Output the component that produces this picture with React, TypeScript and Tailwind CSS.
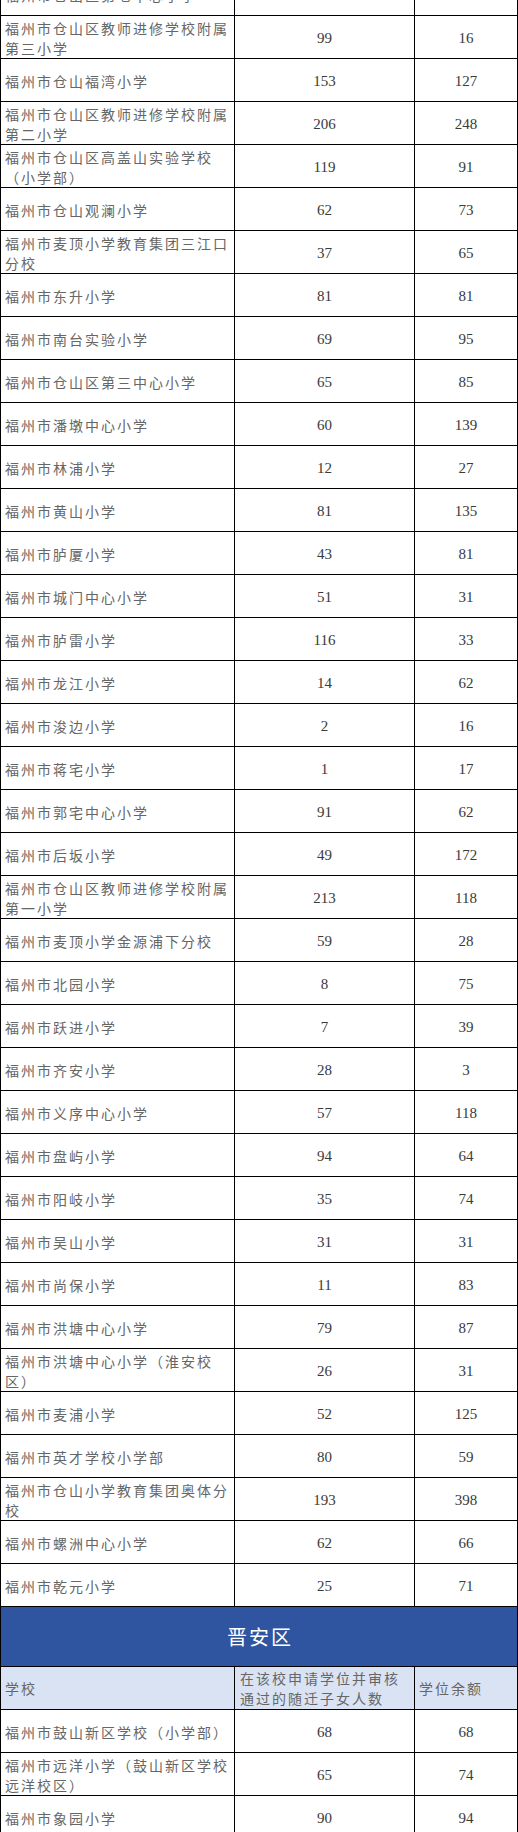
import React from "react";

type Row = [string, string, string];

const cangshan: Row[] = [
  ["福州市仓山区第七中心小学", "111", "55"],
  ["福州市仓山区教师进修学校附属第三小学", "99", "16"],
  ["福州市仓山福湾小学", "153", "127"],
  ["福州市仓山区教师进修学校附属第二小学", "206", "248"],
  ["福州市仓山区高盖山实验学校（小学部）", "119", "91"],
  ["福州市仓山观澜小学", "62", "73"],
  ["福州市麦顶小学教育集团三江口分校", "37", "65"],
  ["福州市东升小学", "81", "81"],
  ["福州市南台实验小学", "69", "95"],
  ["福州市仓山区第三中心小学", "65", "85"],
  ["福州市潘墩中心小学", "60", "139"],
  ["福州市林浦小学", "12", "27"],
  ["福州市黄山小学", "81", "135"],
  ["福州市胪厦小学", "43", "81"],
  ["福州市城门中心小学", "51", "31"],
  ["福州市胪雷小学", "116", "33"],
  ["福州市龙江小学", "14", "62"],
  ["福州市浚边小学", "2", "16"],
  ["福州市蒋宅小学", "1", "17"],
  ["福州市郭宅中心小学", "91", "62"],
  ["福州市后坂小学", "49", "172"],
  ["福州市仓山区教师进修学校附属第一小学", "213", "118"],
  ["福州市麦顶小学金源浦下分校", "59", "28"],
  ["福州市北园小学", "8", "75"],
  ["福州市跃进小学", "7", "39"],
  ["福州市齐安小学", "28", "3"],
  ["福州市义序中心小学", "57", "118"],
  ["福州市盘屿小学", "94", "64"],
  ["福州市阳岐小学", "35", "74"],
  ["福州市吴山小学", "31", "31"],
  ["福州市尚保小学", "11", "83"],
  ["福州市洪塘中心小学", "79", "87"],
  ["福州市洪塘中心小学（淮安校区）", "26", "31"],
  ["福州市麦浦小学", "52", "125"],
  ["福州市英才学校小学部", "80", "59"],
  ["福州市仓山小学教育集团奥体分校", "193", "398"],
  ["福州市螺洲中心小学", "62", "66"],
  ["福州市乾元小学", "25", "71"],
];

const jinan: Row[] = [
  ["福州市鼓山新区学校（小学部）", "68", "68"],
  ["福州市远洋小学（鼓山新区学校远洋校区）", "65", "74"],
  ["福州市象园小学", "90", "94"],
];

const cjk = "font-['Noto_Sans_CJK_SC',sans-serif] text-[14px] tracking-[2px] leading-[20px] text-[#666666]";
const num = "font-['Liberation_Serif','Times_New_Roman',serif] text-[15px] text-[#3a3a3a]";

function DataRow({ r }: { r: Row }) {
  return (
    <div className="grid grid-cols-[234px_180px_103px] h-[43px] border-b border-black">
      <div className={`border-r border-black flex items-center pl-[4px] pr-[4px] pt-[2px] ${cjk}`}>
        <span>{r[0]}</span>
      </div>
      <div className={`border-r border-black flex items-center justify-center pt-[3px] ${num}`}>{r[1]}</div>
      <div className={`border-r border-black flex items-center justify-center pt-[3px] ${num}`}>{r[2]}</div>
    </div>
  );
}

export default function App() {
  return (
    <div className="w-[518px] h-[1832px] overflow-hidden bg-white">
      <div className="-mt-[27px] border-l border-black">
        {cangshan.map((r, i) => (
          <DataRow key={i} r={r} />
        ))}
        <div className="h-[60px] border-b border-r border-black bg-[#2F54A0] flex items-center justify-center">
          <span className="font-['Noto_Sans_CJK_SC',sans-serif] text-[20px] tracking-[2px] text-white pl-[2px]">晋安区</span>
        </div>
        <div className="grid grid-cols-[234px_180px_103px] h-[43px] border-b border-black bg-[#DAE3F3]">
          <div className={`border-r border-black flex items-center pl-[4px] pr-[4px] ${cjk}`}>学校</div>
          <div className={`border-r border-black flex items-center pl-[5px] pr-[4px] ${cjk}`}>
            <span>在该校申请学位并审核通过的随迁子女人数</span>
          </div>
          <div className={`border-r border-black flex items-center pl-[4px] pr-[4px] ${cjk}`}>学位余额</div>
        </div>
        {jinan.map((r, i) => (
          <DataRow key={i} r={r} />
        ))}
      </div>
    </div>
  );
}
